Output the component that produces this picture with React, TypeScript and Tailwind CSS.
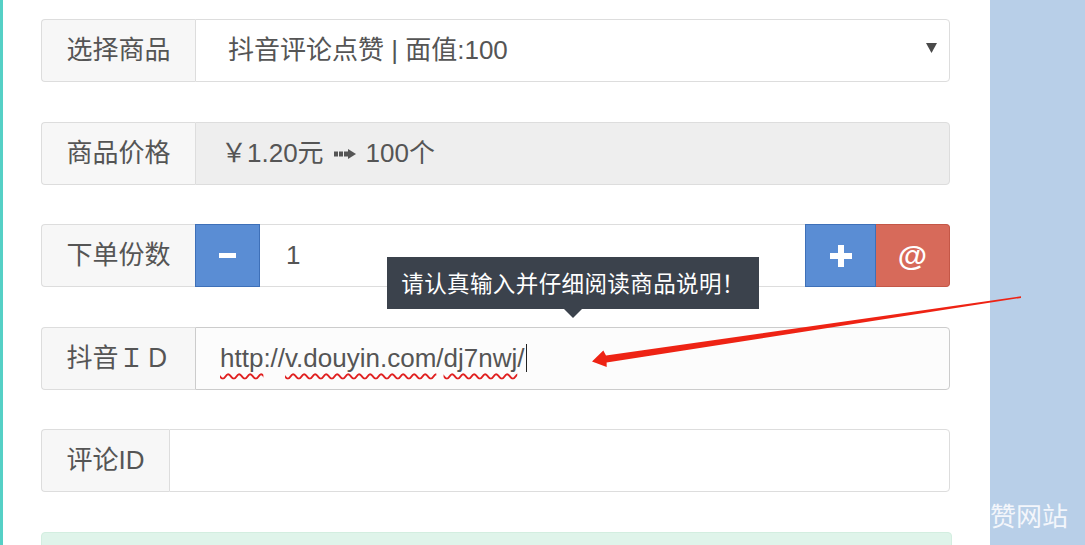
const FONT = { fontFamily: '"Liberation Sans", "Noto Sans CJK SC", sans-serif' };
const CJK = { fontFamily: '"Noto Sans CJK SC", sans-serif' };

function Label({ text, width }: { text: string; width: string }) {
    return (
        <div
            className={`flex shrink-0 items-center justify-center rounded-l-[4px] border border-r-0 border-[#dddddd] bg-[#f7f7f7] text-[26px] text-[#555555] ${width}`}
        >
            {text}
        </div>
    );
}

function Arrow() {
    return (
        <svg
            className="pointer-events-none absolute left-0 top-0"
            width="1085"
            height="545"
            viewBox="0 0 1085 545"
        >
            <polygon
                points="1021,296.2 606,355.6 603.3,350.6 592,361.5 606.7,367 606.6,362.4 1021,297.9"
                fill="#ee2314"
            />
        </svg>
    );
}

// the dashed heavy arrow glyph between price and quantity
function DashArrow() {
    return (
        <svg width="22" height="10" viewBox="0 0 22 10" className="mx-[10px] mt-[2px]">
            <rect x="0" y="2.5" width="4" height="5" fill="#555555" />
            <rect x="5" y="2.5" width="4" height="5" fill="#555555" />
            <rect x="10" y="2.5" width="4" height="5" fill="#555555" />
            <polygon points="14,0 22,5 14,10" fill="#555555" />
        </svg>
    );
}

const wavy =
    'underline decoration-[#e02020] decoration-wavy decoration-[1.5px] underline-offset-[6px]';

export default function App() {
    return (
        <div
            className="relative flex h-[545px] w-[1085px] overflow-hidden bg-white"
            style={FONT}
        >
            <div className="w-[3px] shrink-0 bg-[#55d0c6]" />

            <div className="flex flex-1 flex-col gap-[39.5px] pl-[38px] pr-[40px] pt-[19px]">
                <div className="flex h-[63px] shrink-0">
                    <Label text="选择商品" width="w-[154px]" />
                    <div className="flex flex-1 items-center justify-between rounded-r-[4px] border border-[#dddddd] bg-white pl-[32px] pr-[12px] text-[26px] text-[#555555]">
                        <span>抖音评论点赞 | 面值:100</span>
                        <svg width="11" height="11" viewBox="0 0 11 11" className="-mt-[6px]">
                            <polygon points="0,1 11,1 5.5,11" fill="#4a4a4a" />
                        </svg>
                    </div>
                </div>

                <div className="flex h-[63px] shrink-0">
                    <Label text="商品价格" width="w-[154px]" />
                    <div className="flex flex-1 items-center rounded-r-[4px] border border-[#dddddd] bg-[#eeeeee] pl-[25px] text-[26px] text-[#555555]">
                        <span>￥1.20元</span>
                        <DashArrow />
                        <span>100个</span>
                    </div>
                </div>

                <div className="flex h-[63px] shrink-0">
                    <Label text="下单份数" width="w-[154px]" />
                    <div className="flex w-[65px] shrink-0 items-center justify-center border border-[#3e70b8] bg-[#5a8dd4]">
                        <div className="h-[5px] w-[17px] bg-white" />
                    </div>
                    <div className="flex flex-1 items-center border-y border-[#dddddd] bg-white pl-[26px] text-[26px] text-[#555555]">
                        1
                    </div>
                    <div className="flex w-[71px] shrink-0 items-center justify-center border border-[#3e70b8] bg-[#5a8dd4]">
                        <svg width="22" height="22" viewBox="0 0 22 22">
                            <rect x="8" y="0" width="6" height="22" fill="white" />
                            <rect x="0" y="8" width="22" height="6" fill="white" />
                        </svg>
                    </div>
                    <div className="flex w-[74px] shrink-0 items-center justify-center rounded-r-[4px] border border-l-0 border-[#c45747] bg-[#d76a5a] text-[30px] font-bold text-white">
                        @
                    </div>
                </div>

                <div className="flex h-[63px] shrink-0">
                    <Label text="抖音ＩＤ" width="w-[154px]" />
                    <div className="flex flex-1 items-center rounded-r-[4px] border border-[#cccccc] bg-[#fcfcfc] pl-[24px] text-[26px] text-[#555555]">
                        <span className={wavy}>http</span>
                        <span>://</span>
                        <span className={wavy}>v.douyin.com</span>
                        <span>/</span>
                        <span className={wavy}>dj7nwj</span>
                        <span>/</span>
                        <span className="ml-[1px] h-[28px] w-[1px] bg-[#222222]" />
                    </div>
                </div>

                <div className="flex h-[63px] shrink-0">
                    <Label text="评论ID" width="w-[128px]" />
                    <div className="flex-1 rounded-r-[4px] border border-[#dddddd] bg-white" />
                </div>

                <div className="-mr-[2px] h-[40px] shrink-0 rounded-[4px] border border-[#d3eee0] bg-[#dff4ea]" />
            </div>

            <div className="relative w-[95px] shrink-0 bg-[#b8cfe8]">
                <div
                    className="absolute left-0 top-[497px] whitespace-nowrap text-[26px] leading-[36px] text-[#f3f6fb]"
                    style={CJK}
                >
                    赞网站
                </div>
            </div>

            <div
                className="absolute left-[387px] top-[257px] flex h-[52px] w-[372px] items-center justify-center bg-[#3b424c] text-[22.5px] tracking-[0.4px] text-white"
                style={CJK}
            >
                请认真输入并仔细阅读商品说明！
                <div className="absolute left-[177px] top-[52px] h-0 w-0 border-x-[9px] border-t-[9px] border-x-transparent border-t-[#3b424c]" />
            </div>

            <Arrow />
        </div>
    );
}
